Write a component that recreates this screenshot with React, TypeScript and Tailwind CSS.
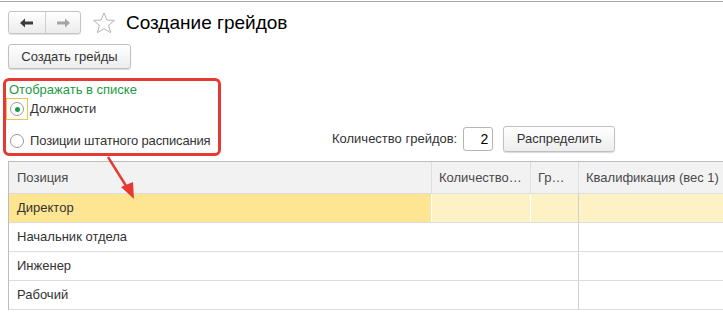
import React from "react";

const rows = ["Директор", "Начальник отдела", "Инженер", "Рабочий"];

function Radio({ checked }: { checked?: boolean }) {
  return (
    <span className="flex h-[14px] w-[14px] items-center justify-center rounded-full border border-[#9a9a9a] bg-white">
      {checked && <span className="h-[5px] w-[5px] rounded-full bg-[#1d9a45]" />}
    </span>
  );
}

export default function App() {
  return (
    <div
      className="relative h-[313px] w-[723px] overflow-hidden bg-white text-[13px] text-[#333]"
      style={{ fontFamily: '"Liberation Sans", Arial, sans-serif' }}
    >
      <div className="mt-px h-px w-full bg-[#a8a8a8]" />

      {/* Title bar */}
      <div className="flex items-center pl-[8px] pt-[9px]">
        <div className="flex h-[23px] w-[73px] overflow-hidden rounded-[3px] border border-[#c4c4c4] bg-gradient-to-b from-white to-[#ececec] shadow-[0_1px_1px_rgba(0,0,0,0.12)]">
          <div className="flex w-[37px] items-center justify-center border-r border-[#d0d0d0]">
            <svg width="14" height="10" viewBox="0 0 14 10">
              <path d="M0 5 L5 0.5 L5 3.5 L13 3.5 L13 6.5 L5 6.5 L5 9.5 Z" fill="#3c3c3c" />
            </svg>
          </div>
          <div className="flex flex-1 items-center justify-center">
            <svg width="14" height="10" viewBox="0 0 14 10">
              <path d="M14 5 L9 0.5 L9 3.5 L1 3.5 L1 6.5 L9 6.5 L9 9.5 Z" fill="#a5a5a5" />
            </svg>
          </div>
        </div>
        <svg className="ml-[11px]" width="24" height="22" viewBox="0 0 24 22">
          <path
            d="M12 1 L14.9 8 L22.5 8.4 L16.6 13.3 L18.6 20.7 L12 16.6 L5.4 20.7 L7.4 13.3 L1.5 8.4 L9.1 8 Z"
            fill="none"
            stroke="#b5b5b5"
            strokeWidth="1"
            strokeLinejoin="round"
          />
        </svg>
        <div className="ml-[10px] text-[19px] leading-none text-black">Создание грейдов</div>
      </div>

      <button className="ml-[8px] mt-[10px] flex h-[25px] w-[123px] items-center justify-center rounded-[3px] border border-[#c0c0c0] bg-gradient-to-b from-white to-[#ededed] text-[13px] text-[#333] shadow-[0_1px_1px_rgba(0,0,0,0.15)]">
        Создать грейды
      </button>

      {/* Options */}
      <div className="mt-[9px] flex items-end">
        <div className="ml-[3px] h-[78px] w-[218px] rounded-[6px] border-[3px] border-[#e53a33] pl-[3px]">
          <div className="mt-[1px] leading-[15px] text-[#1d9a45]">Отображать в списке</div>
          <div className="-ml-[3px] mt-[1px] flex items-center">
            <span className="flex h-[22px] w-[22px] items-center justify-center border border-[#f0c24a]">
              <Radio checked />
            </span>
            <span className="ml-[2px]">Должности</span>
          </div>
          <div className="-ml-[3px] mt-[10px] flex items-center">
            <span className="flex h-[22px] w-[22px] items-center justify-center">
              <Radio />
            </span>
            <span className="ml-[2px] tracking-[-0.15px]">Позиции штатного расписания</span>
          </div>
        </div>
        <div className="mb-[4px] ml-[111px] flex items-center">
          <span>Количество грейдов:</span>
          <span className="ml-[6px] flex h-[24px] w-[30px] items-center justify-end rounded-[3px] border border-[#b5b5b5] pr-[4px] text-[14px] text-black">
            2
          </span>
          <button className="ml-[10px] flex h-[26px] w-[112px] items-center justify-center rounded-[3px] border border-[#c0c0c0] bg-gradient-to-b from-white to-[#ededed] text-[13px] text-[#333] shadow-[0_1px_1px_rgba(0,0,0,0.15)]">
            Распределить
          </button>
        </div>
      </div>

      {/* Table */}
      <div className="ml-[8px] mt-[5px] border-l border-t border-[#bdbdbd]">
        <div className="grid h-[32px] grid-cols-[422px_99px_48px_1fr] border-b border-[#dcdcdc] bg-[#f2f2f2] text-[#4a4a4a]">
          <div className="flex items-center pl-[8px]">Позиция</div>
          <div className="flex items-center border-l border-[#dedede] pl-[7px]">
            <span className="truncate">Количество…</span>
          </div>
          <div className="flex items-center border-l border-[#dedede] pl-[7px]">
            <span className="truncate">Гр…</span>
          </div>
          <div className="flex items-center border-l border-[#dedede] pl-[7px] whitespace-nowrap">
            Квалификация (вес 1)
          </div>
        </div>
        {rows.map((r, i) =>
          i === 0 ? (
            <div
              key={r}
              className="grid h-[29px] grid-cols-[422px_99px_48px_1fr] border-b border-[#dcdcdc] bg-white"
            >
              <div className="flex items-center bg-[#fde591] pl-[8px]">{r}</div>
              <div className="border-l border-white bg-[#fdf2c6]" />
              <div className="border-l border-white bg-[#fdf2c6]" />
              <div className="border-l border-[#d0d0d0] bg-[#fdf2c6]" />
            </div>
          ) : (
            <div key={r} className="grid h-[29px] grid-cols-[569px_1fr] border-b border-[#dcdcdc]">
              <div className="flex items-center pl-[8px]">{r}</div>
              <div className="border-l border-[#d0d0d0]" />
            </div>
          )
        )}
      </div>

      {/* Annotation arrow */}
      <svg className="absolute left-0 top-0" width="723" height="313" viewBox="0 0 723 313">
        <line x1="108" y1="157" x2="128" y2="189" stroke="#e53a33" strokeWidth="2.5" />
        <path d="M134 199 L121 187 L133 182 Z" fill="#e53a33" />
      </svg>
    </div>
  );
}
